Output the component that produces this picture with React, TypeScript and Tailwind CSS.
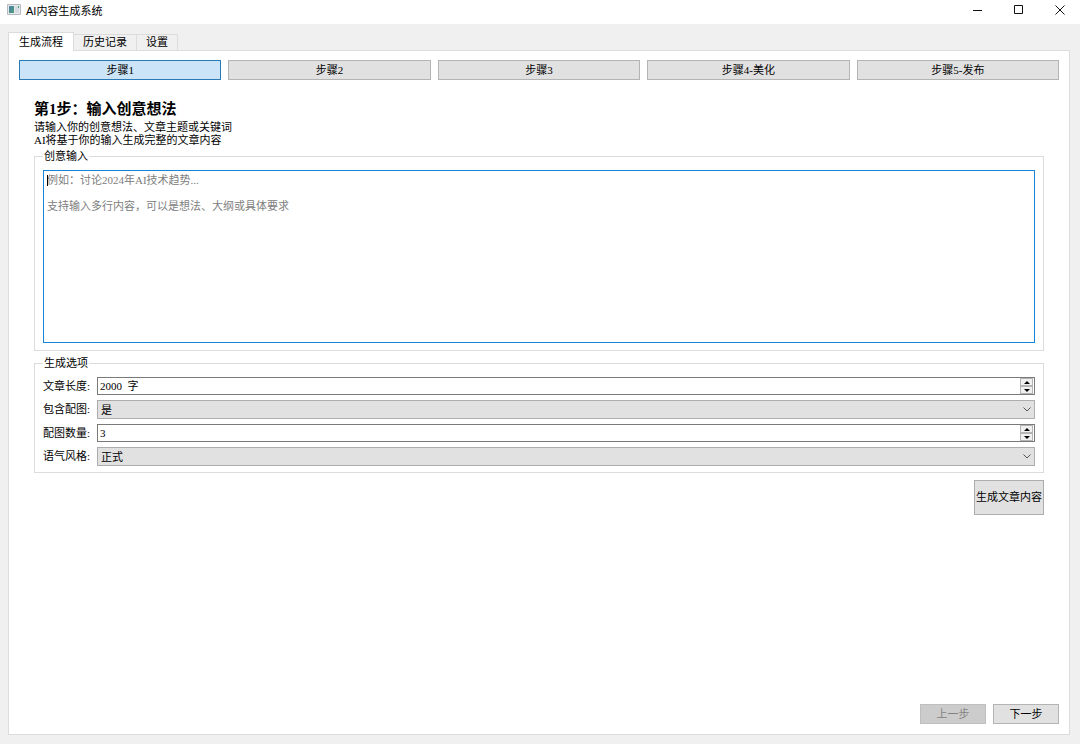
import { useState } from 'react';

const steps = ['步骤1', '步骤2', '步骤3', '步骤4-美化', '步骤5-发布'];
const tabs = ['生成流程', '历史记录', '设置'];

const Arrow = ({ down = false }: { down?: boolean }) => (
	<svg width="6" height="3" viewBox="0 0 6 3" aria-hidden="true">
		<path d={down ? 'M0 0h6L3 3z' : 'M0 3h6L3 0z'} fill="#000" />
	</svg>
);

const SpinBox = ({ id, initial }: { id: string; initial: string }) => {
	const [value, setValue] = useState(initial);
	const step = (delta: number) => setValue(value.replace(/\d+/, (n) => String(Math.max(0, Number(n) + delta))));

	return (
		<div className="flex h-[18px] border border-[#7a7a7a] bg-white">
			<input
				id={id}
				className="min-w-0 flex-1 px-0.5 outline-none"
				value={value}
				onChange={(e) => setValue(e.target.value)}
			/>
			<div className="flex w-[14px] flex-col pr-px">
				<button
					aria-label="增加"
					onClick={() => step(1)}
					className="flex h-2 items-center justify-center border border-[#b4b4b4] bg-[#f0f0f0]"
				>
					<Arrow />
				</button>
				<button
					aria-label="减少"
					onClick={() => step(-1)}
					className="flex h-2 items-center justify-center border border-[#b4b4b4] bg-[#f0f0f0]"
				>
					<Arrow down />
				</button>
			</div>
		</div>
	);
};

const ComboBox = ({ id, options }: { id: string; options: string[] }) => (
	<div className="relative h-[19px]">
		<select
			id={id}
			className="h-full w-full appearance-none border border-[#adadad] bg-[#e1e1e1] pl-[3px] leading-4 outline-none"
		>
			{options.map((option) => (
				<option key={option}>{option}</option>
			))}
		</select>
		<svg
			className="pointer-events-none absolute top-[7px] right-1"
			width="8"
			height="5"
			viewBox="0 0 8 5"
			fill="none"
			stroke="#555"
			aria-hidden="true"
		>
			<path d="M.5 .5 4 4 7.5 .5" />
		</svg>
	</div>
);

const App = () => {
	const [tab, setTab] = useState(0);
	const [step, setStep] = useState(0);
	const [idea, setIdea] = useState('');

	return (
		<div className="flex min-h-screen flex-col bg-[#f0f0f0] font-['Liberation_Serif','Noto_Sans_CJK_SC',sans-serif] text-[11px] leading-[13px] text-black">
			{/* Title bar */}
			<header className="flex h-6 items-start bg-white pl-[7px] font-['Liberation_Sans','Noto_Sans_CJK_SC',sans-serif]">
				<svg className="mt-1" width="14" height="11" viewBox="0 0 14 11" aria-hidden="true">
					<defs>
						<linearGradient id="screen" x1="0" y1="0" x2="1" y2="1">
							<stop offset="0" stopColor="#4a7fb0" />
							<stop offset="1" stopColor="#4f9f72" />
						</linearGradient>
					</defs>
					<path d="M.5 .5h13v10H.5z" fill="#e6eaed" stroke="#b4babf" />
					<path d="M2 2h5v7H2z" fill="url(#screen)" />
					<path d="M8 2h4v7H8z" fill="#d4dbe0" />
					<path d="M11 2h1v2h-1z" fill="#4f9f72" />
				</svg>
				<h1 className="ml-[5px] mt-[5px] flex-1">AI内容生成系统</h1>
				<button aria-label="最小化" className="flex h-5 w-[41px] items-center justify-center">
					<svg width="10" height="10" viewBox="0 0 10 10" stroke="#111">
						<path d="M0 5.5h9" />
					</svg>
				</button>
				<button aria-label="最大化" className="flex h-5 w-[41px] items-center justify-center">
					<svg width="10" height="10" viewBox="0 0 10 10" fill="none" stroke="#111">
						<path d="M.5 .5h8v8h-8z" />
					</svg>
				</button>
				<button aria-label="关闭" className="flex h-5 w-[41px] items-center justify-center">
					<svg width="10" height="10" viewBox="0 0 10 10" stroke="#111">
						<path d="M.5 .5l9 9M9.5 .5l-9 9" />
					</svg>
				</button>
			</header>

			<div className="flex flex-1 flex-col pt-2 pr-2.5 pb-[9px] pl-2">
				{/* Tabs */}
				<nav className="flex items-end">
					{tabs.map((name, i) => (
						<button
							key={name}
							onClick={() => setTab(i)}
							className={
								i === tab
									? 'z-10 -mb-px h-[19px] border border-b-0 border-[#dcdcdc] bg-white px-[10px]'
									: 'h-4 border border-b-0 border-l-0 border-[#dcdcdc] bg-[#f0f0f0] px-[9px]'
							}
						>
							{name}
						</button>
					))}
				</nav>

				<main className="flex flex-1 flex-col border border-[#dcdcdc] bg-white px-2.5 pt-[9px] pb-2.5">
					<div className="flex gap-[7px]">
						{steps.map((name, i) => (
							<button
								key={name}
								onClick={() => setStep(i)}
								className={
									i === step
										? 'h-5 flex-1 border border-[#2a7ab8] bg-[#cce4f7]'
										: 'h-5 flex-1 border border-[#b4b4b4] bg-[#e1e1e1]'
								}
							>
								{name}
							</button>
						))}
					</div>

					<section className="flex flex-col px-[15px] pt-[19px]">
						<h2 className="text-[15px] leading-5 font-bold">第1步：输入创意想法</h2>
						<p className="mt-0.5">
							请输入你的创意想法、文章主题或关键词
							<br />
							AI将基于你的输入生成完整的文章内容
						</p>

						<fieldset className="mt-[3px] border border-[#dcdcdc] px-2 pb-[7px]">
							<legend className="px-px">
								<label htmlFor="idea">创意输入</label>
							</legend>
							<div className="relative pt-[7px]">
								<textarea
									id="idea"
									className="block h-[173px] w-full resize-none border border-[#1883d7] px-[3px] py-[3px] outline-none placeholder:text-[#808080]"
									placeholder={'例如：讨论2024年AI技术趋势...\n\n支持输入多行内容，可以是想法、大纲或具体要求'}
									value={idea}
									onChange={(e) => setIdea(e.target.value)}
								/>
								{/* Text cursor */}
								{idea === '' && (
									<span className="pointer-events-none absolute top-3 left-1 h-[11px] w-px bg-black" />
								)}
							</div>
						</fieldset>

						<fieldset className="mt-1.5 border border-[#dcdcdc] px-2 pb-1.5">
							<legend className="px-px">生成选项</legend>
							<div className="grid grid-cols-[auto_1fr] items-center gap-x-[7px] gap-y-[5px] pt-[7px]">
								<label htmlFor="length">文章长度:</label>
								<SpinBox id="length" initial={'2000\u00a0 字'} />
								<label htmlFor="images">包含配图:</label>
								<ComboBox id="images" options={['是', '否']} />
								<label htmlFor="count">配图数量:</label>
								<SpinBox id="count" initial="3" />
								<label htmlFor="tone">语气风格:</label>
								<ComboBox id="tone" options={['正式', '轻松']} />
							</div>
						</fieldset>

						<button className="mt-[7px] h-[35px] self-end border border-[#adadad] bg-[#e1e1e1] px-px">
							生成文章内容
						</button>
					</section>

					<footer className="mt-auto flex justify-end gap-[7px]">
						<button
							disabled={step === 0}
							onClick={() => setStep(step - 1)}
							className="h-5 w-[66px] border border-[#b4b4b4] bg-[#e1e1e1] disabled:border-[#bfbfbf] disabled:bg-[#cccccc] disabled:text-[#838383]"
						>
							上一步
						</button>
						<button
							onClick={() => setStep(Math.min(step + 1, steps.length - 1))}
							className="h-5 w-[66px] border border-[#b4b4b4] bg-[#e1e1e1]"
						>
							下一步
						</button>
					</footer>
				</main>
			</div>
		</div>
	);
};

export default App;
